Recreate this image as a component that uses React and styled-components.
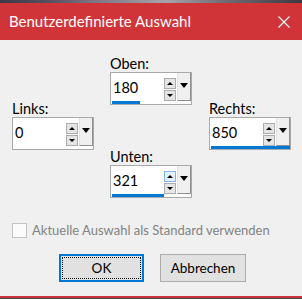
import styled, { createGlobalStyle } from "styled-components";

const GlobalStyle = createGlobalStyle`
  html, body {
    margin: 0;
    padding: 0;
  }
  body {
    width: 302px;
    height: 299px;
    overflow: hidden;
    background: #f0f0f0;
    font-family: Lato, "Noto Sans", "Liberation Sans", sans-serif;
  }
`;

const Window = styled.div`
  width: 302px;
  height: 299px;
  display: flex;
  flex-direction: column;
  background: #f0f0f0;
`;

const TopStrip = styled.div`
  height: 3px;
  background: linear-gradient(
    90deg,
    #3d3946 0%,
    #5b5262 18%,
    #7c7280 30%,
    #a6a4aa 55%,
    #6c6a72 75%,
    #3b3942 100%
  );
`;

const TitleBar = styled.div`
  height: 37px;
  background: #d13438;
  color: #fff;
  display: flex;
  align-items: center;
  justify-content: space-between;
  padding: 0 12px 0 9px;
`;

const Title = styled.span`
  font-size: 15px;
  line-height: 1;
`;

const Body = styled.div`
  flex: 1;
  display: flex;
  flex-direction: column;
`;

const FieldsRow = styled.div`
  display: flex;
  padding: 15px 0 0 12px;
`;

const Column = styled.div`
  width: ${(p) => p.$width}px;
  padding-top: ${(p) => p.$top || 0}px;
  display: flex;
  flex-direction: column;
  gap: 43px;
`;

const Field = styled.div`
  display: flex;
  flex-direction: column;
`;

const Label = styled.label`
  font-size: 14.5px;
  line-height: 17px;
  color: #000;
`;

const SpinBox = styled.div`
  width: 82px;
  height: 33px;
  box-sizing: border-box;
  border: 1px solid #a9a9a9;
  background: #fff;
  display: flex;
  flex-direction: column;
`;

const SpinRow = styled.div`
  flex: 1;
  display: flex;
`;

const Value = styled.div`
  flex: 1;
  padding: 1px 0 0 2px;
  font-size: 14.5px;
  line-height: 27px;
  color: #000;
`;

const Arrows = styled.div`
  width: 12px;
  margin-right: 1px;
  padding-top: 5px;
  display: flex;
  flex-direction: column;
  gap: 1px;
`;

const ArrowBtn = styled.div`
  width: 12px;
  height: 11px;
  box-sizing: border-box;
  border: 1px solid ${(p) => (p.$hot ? "#7eb4ea" : "#adadad")};
  background: ${(p) => (p.$hot ? "#e5f1fb" : "#e5e5e5")};
  display: flex;
  align-items: center;
  justify-content: center;

  &::before {
    content: "";
    width: 0;
    height: 0;
    border-left: 3px solid transparent;
    border-right: 3px solid transparent;
    ${(p) =>
      p.$down
        ? "border-top: 3px solid #000;"
        : "border-bottom: 3px solid #000;"}
  }
`;

const DropBtn = styled.div`
  width: 14px;
  box-sizing: border-box;
  background: #f0f0f0;
  border-left: 1px solid #e3e3e3;
  border-right: 1px solid #8f8f8f;
  border-bottom: 1px solid #8f8f8f;
  display: flex;
  justify-content: center;
  padding-top: 10px;

  &::before {
    content: "";
    width: 0;
    height: 0;
    border-left: 4px solid transparent;
    border-right: 4px solid transparent;
    border-top: 5px solid #000;
  }
`;

const Track = styled.div`
  height: 3px;
  padding-left: 1px;
  display: flex;
`;

const Fill = styled.div`
  height: 100%;
  background: #0078d7;
`;

const CheckRow = styled.div`
  margin-top: 23px;
  padding-left: 12px;
  height: 18px;
  display: flex;
  align-items: center;
  gap: 5px;
`;

const CheckBox = styled.span`
  width: 15px;
  height: 15px;
  box-sizing: border-box;
  border: 1px solid #c4c4c4;
  background: #fbfbfb;
`;

const CheckText = styled.span`
  font-size: 13px;
  color: #838383;
  white-space: nowrap;
`;

const ButtonRow = styled.div`
  margin-top: 15px;
  padding-left: 59px;
  display: flex;
  gap: 16px;
`;

const Button = styled.button`
  width: ${(p) => p.$width}px;
  height: 28px;
  box-sizing: border-box;
  padding: 0;
  background: #e1e1e1;
  border: ${(p) => (p.$default ? "2px solid #0078d7" : "1px solid #adadad")};
  font-family: inherit;
  font-size: 13.5px;
  color: #000;
  ${(p) => p.$default && "outline: 1px dotted #000; outline-offset: -4px;"}
`;

const BottomEdge = styled.div`
  height: 2px;
  background: #c9383d;
  border-bottom: 1px solid #4a4452;
`;

const CloseIcon = () => (
  <svg width="12" height="12" viewBox="0 0 12 12">
    <path d="M0.5 0.5 L11.5 11.5 M11.5 0.5 L0.5 11.5" stroke="#fff" strokeWidth="1.1" />
  </svg>
);

const Spinner = ({ label, value, fill, hot }) => (
  <Field>
    <Label>{label}</Label>
    <SpinBox>
      <SpinRow>
        <Value>{value}</Value>
        <Arrows>
          <ArrowBtn $hot={hot} />
          <ArrowBtn $down />
        </Arrows>
        <DropBtn />
      </SpinRow>
      <Track>
        <Fill style={{ width: fill }} />
      </Track>
    </SpinBox>
  </Field>
);

export default function App() {
  return (
    <>
      <GlobalStyle />
      <Window>
        <TopStrip />
        <TitleBar>
          <Title>Benutzerdefinierte Auswahl</Title>
          <CloseIcon />
        </TitleBar>
        <Body>
          <FieldsRow>
            <Column $width={98} $top={45}>
              <Spinner label="Links:" value="0" fill={0} />
            </Column>
            <Column $width={99}>
              <Spinner label="Oben:" value="180" fill={28} />
              <Spinner label="Unten:" value="321" fill={52} hot />
            </Column>
            <Column $width={82} $top={45}>
              <Spinner label="Rechts:" value="850" fill={79} />
            </Column>
          </FieldsRow>
          <CheckRow>
            <CheckBox />
            <CheckText>Aktuelle Auswahl als Standard verwenden</CheckText>
          </CheckRow>
          <ButtonRow>
            <Button $width={85} $default>
              OK
            </Button>
            <Button $width={86}>Abbrechen</Button>
          </ButtonRow>
        </Body>
        <BottomEdge />
      </Window>
    </>
  );
}
